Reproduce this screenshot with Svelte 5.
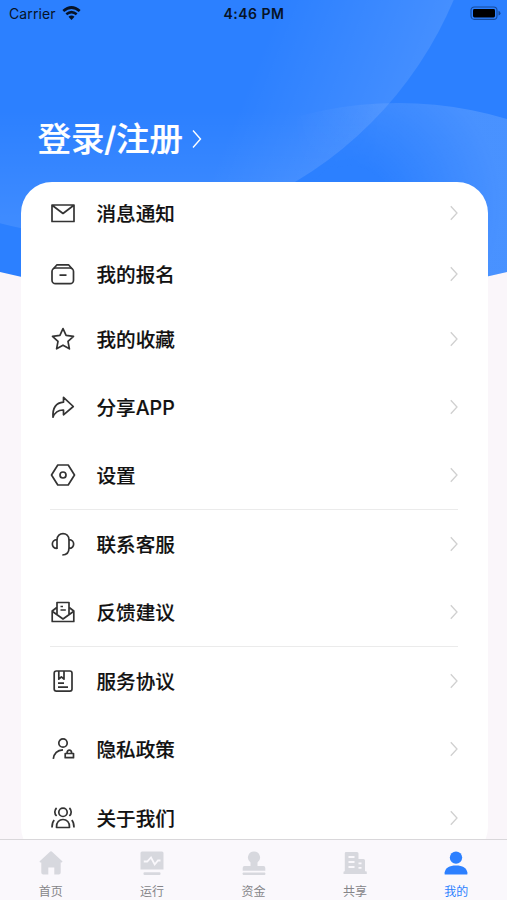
<script lang="ts">
  const menu = [
    { icon: 'mail', label: '消息通知', short: true },
    { icon: 'box', label: '我的报名', short: true },
    { icon: 'star', label: '我的收藏' },
    { icon: 'share', label: '分享APP' },
    { icon: 'settings', label: '设置', divider: true },
    { icon: 'headset', label: '联系客服' },
    { icon: 'feedback', label: '反馈建议', divider: true },
    { icon: 'agreement', label: '服务协议' },
    { icon: 'privacy', label: '隐私政策' },
    { icon: 'about', label: '关于我们' }
  ];

  const tabs = [
    { icon: 'home', label: '首页' },
    { icon: 'monitor', label: '运行' },
    { icon: 'stamp', label: '资金' },
    { icon: 'building', label: '共享' },
    { icon: 'user', label: '我的' }
  ];

  let active = $state('user');
</script>

<div class="screen">
  <svg class="backdrop" viewBox="0 0 507 300" aria-hidden="true">
    <defs>
      <linearGradient id="upper" gradientUnits="userSpaceOnUse" x1="265" y1="40" x2="415" y2="100">
        <stop offset="0" stop-color="#fff" stop-opacity="0" />
        <stop offset="1" stop-color="#fff" stop-opacity="0.12" />
      </linearGradient>
      <linearGradient id="left" gradientUnits="userSpaceOnUse" x1="0" y1="110" x2="0" y2="235">
        <stop offset="0" stop-color="#fff" stop-opacity="0" />
        <stop offset="1" stop-color="#fff" stop-opacity="0.1" />
      </linearGradient>
      <radialGradient id="lower" gradientUnits="userSpaceOnUse" cx="350" cy="205" r="150">
        <stop offset="0.25" stop-color="#fff" stop-opacity="0" />
        <stop offset="1" stop-color="#fff" stop-opacity="0.14" />
      </radialGradient>
      <linearGradient id="fade" gradientUnits="userSpaceOnUse" x1="290" y1="0" x2="380" y2="0">
        <stop offset="0" stop-color="#000" />
        <stop offset="1" stop-color="#fff" />
      </linearGradient>
      <mask id="fadeMask" maskUnits="userSpaceOnUse" x="0" y="0" width="507" height="300">
        <rect width="507" height="300" fill="url(#fade)" />
      </mask>
      <clipPath id="wave">
        <path d="M0 0H507V272Q253 335 0 272Z" />
      </clipPath>
    </defs>
    <g clip-path="url(#wave)">
      <rect width="507" height="300" fill="#2c80ff" />
      <circle cx="98" cy="-150" r="386" fill="url(#upper)" />
      <circle cx="98" cy="-150" r="386" fill="url(#left)" />
      <circle cx="398" cy="482" r="379" fill="url(#lower)" mask="url(#fadeMask)" />
    </g>
  </svg>

  <header class="status">
    <div class="carrier">
      <span>Carrier</span>
      <svg width="19" height="15" viewBox="0 0 19 15" fill="none" stroke="#071326">
        <path d="M1.3 5Q9.5-2 17.7 5" stroke-width="2.7" />
        <path d="M4.3 8.3Q9.5 3.9 14.7 8.3" stroke-width="2.5" />
        <path d="M6.5 10.8Q9.5 8.4 12.5 10.8L9.5 14Z" fill="#071326" stroke="none" />
      </svg>
    </div>
    <span class="time">4:46 PM</span>
    <div class="battery">
      <svg width="31" height="15" viewBox="0 0 31 15">
        <rect x="1" y="1" width="26" height="12.4" rx="3.4" fill="none" stroke="#164a9b" stroke-width="1.1" />
        <rect x="3" y="3" width="22" height="8.4" rx="1.4" fill="#000" />
        <path d="M28.5 4.8Q30.5 5.6 30.5 7.2T28.5 9.6Z" fill="#164a9b" />
      </svg>
    </div>
  </header>

  <button class="login">
    <span>登录<span class="slash">/</span>注册</span>
    <svg width="10" height="20" viewBox="0 0 10 20" fill="none" stroke="#fff" stroke-width="1.4">
      <path d="M1 1.5L8.5 10L1 18.5" />
    </svg>
  </button>

  <main class="card">
    {#each menu as item}
      <button class="row" class:short={item.short} class:divider={item.divider}>
        <svg class="icon" viewBox="0 0 26 26">
          {#if item.icon === 'mail'}
            <path d="M2 5H24V21.5H2ZM2.5 5.5L13 13.5L23.5 5.5" />
          {:else if item.icon === 'box'}
            <rect x="2" y="7" width="21.5" height="15.7" rx="3.5" />
            <path d="M3.2 8L7 3.8H18.5L22.3 8M9.5 14.2H16.5" />
          {:else if item.icon === 'star'}
            <path d="M13 2.6L16.1 9.4L23.5 10.3L18 15.4L19.4 22.8L13 19.2L6.6 22.8L8 15.4L2.5 10.3L9.9 9.4Z" />
          {:else if item.icon === 'share'}
            <path d="M13.5 3.4L23.3 12.5L13.5 20.8V16C8.2 15.8 5 18 3 23.2C2.5 14.5 6 8.8 13.5 8.2Z" />
          {:else if item.icon === 'settings'}
            <path d="M7.8 3H18.2L24.5 13L18.2 23H7.8L1.5 13Z" />
            <circle cx="13" cy="13" r="3" />
          {:else if item.icon === 'headset'}
            <path d="M7 18V9C7 0.5 19 0.5 19 9V17C19 21.3 16.5 24 12.3 24M7 8.7C.8 8.7.8 17.5 7 17.5M19 8.7C25.2 8.7 25.2 17.5 19 17.5" />
          {:else if item.icon === 'feedback'}
            <path d="M6.8 8.5L2.2 12V22.5H23.8V12L19.2 8.5M2.2 12.2L13 20L23.8 12.2M7 15.5V3.5H19V15.5M10.5 7.5H13M10.5 11H15.8" />
          {:else if item.icon === 'agreement'}
            <rect x="4.2" y="3" width="17.8" height="20.2" rx="2.2" />
            <path d="M8.8 3V11.2L11.4 8.9L14 11.2V3M8 15.2H14M8 19.2H18" />
          {:else if item.icon === 'privacy'}
            <circle cx="13" cy="7" r="4.2" />
            <path d="M3.3 22.8C4 17.2 7.5 14.2 13 13.8M15.2 17.5H23.5V21.7H15.2ZM17 17.2C17.2 13.2 21.5 13.2 21.7 17.2" />
          {:else}
            <circle cx="13" cy="7.3" r="4.2" />
            <path d="M6.5 22.5C5.4 11.8 20.6 11.8 19.5 22.5ZM6.6 3C4.2 5.2 4.2 8.7 6.6 11M19.4 3C21.8 5.2 21.8 8.7 19.4 11M4.2 15C2.6 16.8 2 19.3 2 22.5M21.8 15C23.4 16.8 24 19.3 24 22.5" />
          {/if}
        </svg>
        <span class="label">{item.label}</span>
        <svg class="chevron" viewBox="0 0 8 16">
          <path d="M.8 1.2L7 8L.8 14.8" />
        </svg>
      </button>
    {/each}
  </main>

  <nav class="tabbar">
    {#each tabs as tab}
      <button class="tab" class:active={active === tab.icon} onclick={() => (active = tab.icon)}>
        <svg viewBox="0 0 26 26">
          {#if tab.icon === 'home'}
            <path d="M13 1.3Q13.7 1.3 14.3 1.9L24.3 11.2Q25 12.3 23.5 12.5H22.7V22.5Q22.7 24.5 20.7 24.5H16.3V17.5H10.3V24.5H5.3Q3.3 24.5 3.3 22.5V12.5H2.5Q1 12.3 1.7 11.2L11.7 1.9Q12.3 1.3 13 1.3Z" />
          {:else if tab.icon === 'monitor'}
            <path d="M3 1.5H23Q24.5 1.5 24.5 3V19.5H1.5V3Q1.5 1.5 3 1.5Z" />
            <rect x="4.5" y="22.3" width="17" height="2.8" rx="1" />
            <path class="cut" d="M4.8 11.5H8.2L12 7.5L15.7 14.5L19 10.5H21.5" />
          {:else if tab.icon === 'stamp'}
            <path d="M13 1.5A6 6 0 0 1 16.5 12.4V16H22.5Q24.3 16 24.3 18V20.7H1.7V18Q1.7 16 3.5 16H9.5V12.4A6 6 0 0 1 13 1.5Z" />
            <rect x="1.7" y="22.5" width="22.6" height="2.5" rx=".7" />
          {:else if tab.icon === 'building'}
            <path fill-rule="evenodd" d="M4 2H15Q16.5 2 16.5 3.5V9H21.5Q23 9 23 10.5V21.3H24Q24.8 21.3 24.8 22.3V24H1.5V22.3Q1.5 21.3 2.5 21.3H2.8V3.2Q2.8 2 4 2ZM6.5 6V8H12.5V6ZM6.5 11V13H12.5V11ZM6.5 16V18H12.5V16ZM16.5 12.5V14.2H19.5V12.5ZM16.5 17V18.7H19.5V17Z" />
          {:else}
            <circle cx="13" cy="7.6" r="6.2" />
            <path d="M1.6 24V22.4C2.5 18 6.3 15.4 13 15.4S23.5 18 24.4 22.4V24Q24.4 24.5 23.7 24.5H2.3Q1.6 24.5 1.6 24Z" />
          {/if}
        </svg>
        <span>{tab.label}</span>
      </button>
    {/each}
  </nav>
</div>

<style>
:global(body) {
  background: #faf6fa;
}

.screen {
  position: relative;
  display: flex;
  flex-direction: column;
  width: 507px;
  height: 900px;
  overflow: hidden;
  background: #faf6fa;
  font-family: Inter, "Noto Sans CJK SC", sans-serif;
}

.backdrop {
  position: absolute;
  top: 0;
  left: 0;
  width: 507px;
  height: 300px;
}

button {
  padding: 0;
  border: 0;
  background: none;
  font-family: inherit;
  cursor: pointer;
}

.status {
  position: relative;
  display: grid;
  grid-template-columns: 1fr auto 1fr;
  align-items: center;
  height: 27px;
  padding: 0 6px 0 9px;
  box-sizing: border-box;
  color: #071326;
  font-size: 14px;
}

.carrier {
  display: flex;
  align-items: center;
  gap: 6px;
  letter-spacing: 0.1px;
}

.time {
  margin-right: 2px;
  font-weight: 600;
  letter-spacing: 0.5px;
}

.battery {
  display: flex;
  justify-content: flex-end;
}

.login {
  position: relative;
  display: flex;
  align-items: center;
  gap: 9px;
  height: 60px;
  margin: 82px 0 13px 37.5px;
  color: #fff;
  font-size: 33.5px;
  font-weight: 500;
  line-height: 60px;
  -webkit-text-stroke: 0.2px #fff;
}

.slash {
  margin: 0 -0.5px;
}

.card {
  position: relative;
  display: flex;
  flex-direction: column;
  flex: none;
  width: 467px;
  height: 676px;
  margin-left: 20.5px;
  padding: 0 29.5px;
  box-sizing: border-box;
  border-radius: 31px;
  background: #fff;
}

.row {
  display: flex;
  align-items: center;
  flex: none;
  height: 68.4px;
  box-sizing: border-box;
  color: #111;
  text-align: left;
}

.row.short {
  height: 61.3px;
}

.row.divider {
  border-bottom: 1px solid #ebebeb;
}

.icon {
  width: 26px;
  height: 26px;
  fill: none;
  stroke: #333;
  stroke-width: 1.7;
  stroke-linejoin: round;
}

.label {
  flex: 1;
  margin: -1px 0 0 20.5px;
  font-size: 19.6px;
  font-weight: 500;
  -webkit-text-stroke: 0.15px #111;
}

.chevron {
  width: 8px;
  height: 16px;
  fill: none;
  stroke: #d0d0d0;
  stroke-width: 1.3;
}

.tabbar {
  position: absolute;
  right: 0;
  bottom: 0;
  left: 0;
  display: flex;
  height: 61px;
  box-sizing: border-box;
  border-top: 1px solid #d9d7da;
  background: #faf8fc;
}

.tab {
  display: flex;
  flex: 1;
  flex-direction: column;
  align-items: center;
  padding-top: 10px;
  color: #858589;
  font-size: 12px;
  line-height: 17px;
}

.tab svg {
  width: 26px;
  height: 26px;
  margin-bottom: 7px;
  fill: #d7d8de;
}

.tab .cut {
  fill: none;
  stroke: #faf8fc;
  stroke-width: 1.8;
}

.tab.active {
  color: #2c80ff;
}

.tab.active svg {
  fill: #2c80ff;
}
</style>
